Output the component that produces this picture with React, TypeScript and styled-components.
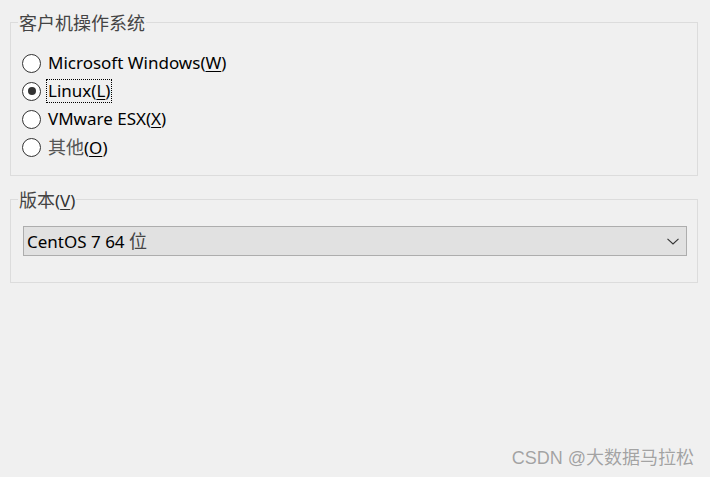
import React from "react";
import styled, { createGlobalStyle } from "styled-components";

const GlobalStyle = createGlobalStyle`
  html, body {
    margin: 0;
    padding: 0;
    background: #f0f0f0;
  }
  body {
    font-family: "Noto Sans", "Noto Sans CJK SC", sans-serif;
    font-size: 17px;
    color: #000;
  }
`;

const Page = styled.div`
  position: relative;
  width: 710px;
  height: 477px;
  box-sizing: border-box;
  padding: 12px 12px 0 10px;
  display: flex;
  flex-direction: column;
  gap: 13px;
  overflow: hidden;
`;

const GroupBox = styled.fieldset<{ $pt: number; $pb: number }>`
  margin: 0;
  min-width: 0;
  border: 1px solid #dcdcdc;
  padding: ${(p) => p.$pt}px 10px ${(p) => p.$pb}px 12px;
`;

const Legend = styled.legend`
  margin-left: -5px;
  padding: 0 1px;
  line-height: 20px;
  height: 20px;
  color: #333;
`;

const Cjk = styled.span<{ $tone?: string }>`
  font-family: "Noto Sans CJK SC", sans-serif;
  font-size: 18px;
  color: ${(p) => p.$tone || "#3a3a3a"};
`;

const Key = styled.span`
  text-decoration: underline;
  text-underline-offset: 2px;
  text-decoration-thickness: 1px;
`;

const RadioList = styled.div`
  display: flex;
  flex-direction: column;
`;

const RadioRow = styled.label`
  display: flex;
  align-items: center;
  height: 28px;
  gap: 5px;
  margin-left: -1px;
`;

const RadioCircle = styled.span<{ $checked?: boolean }>`
  position: relative;
  width: 19px;
  height: 19px;
  box-sizing: border-box;
  border-radius: 50%;
  border: 1.5px solid #333;
  background: #fff;
  flex: none;
  &::after {
    content: "";
    display: ${(p) => (p.$checked ? "block" : "none")};
    position: absolute;
    left: 50%;
    top: 50%;
    width: 8px;
    height: 8px;
    margin: -4px 0 0 -4px;
    border-radius: 50%;
    background: #333;
  }
`;

const RadioText = styled.span<{ $focused?: boolean }>`
  line-height: 22px;
  padding: 0 1px;
  border: 1px dotted ${(p) => (p.$focused ? "#000" : "transparent")};
  white-space: nowrap;
`;

const Combo = styled.div`
  height: 30px;
  box-sizing: border-box;
  border: 1px solid #adadad;
  background: #e1e1e1;
  display: flex;
  align-items: center;
  justify-content: space-between;
  padding: 0 7px 0 3px;
`;

const ComboText = styled.span`
  line-height: 22px;
  white-space: nowrap;
`;

const Watermark = styled.div`
  position: absolute;
  right: 16px;
  bottom: 7px;
  font-family: "Liberation Sans", "Noto Sans CJK SC", sans-serif;
  font-size: 18px;
  line-height: 24px;
  color: #a3a3a3;
  text-shadow: 0 0 1px rgba(255, 255, 255, 0.9);
  white-space: nowrap;
`;

const Chevron = () => (
  <svg width="12" height="7" viewBox="0 0 12 7" aria-hidden>
    <polyline
      points="0.5,0.8 6,6 11.5,0.8"
      fill="none"
      stroke="#333"
      strokeWidth="1.1"
    />
  </svg>
);

type Opt = { text: React.ReactNode; key: string; checked?: boolean };

const options: Opt[] = [
  { text: "Microsoft Windows", key: "W" },
  { text: "Linux", key: "L", checked: true },
  { text: "VMware ESX", key: "X" },
  { text: <Cjk $tone="#555">其他</Cjk>, key: "O" },
];

export default function App() {
  return (
    <>
      <GlobalStyle />
      <Page>
        <GroupBox $pt={17} $pb={14}>
          <Legend>
            <Cjk $tone="#444">客户机操作系统</Cjk>
          </Legend>
          <RadioList>
            {options.map((o) => (
              <RadioRow key={o.key}>
                <RadioCircle $checked={o.checked} />
                <RadioText $focused={o.checked}>
                  {o.text}(<Key>{o.key}</Key>)
                </RadioText>
              </RadioRow>
            ))}
          </RadioList>
        </GroupBox>
        <GroupBox $pt={17} $pb={26}>
          <Legend>
            <Cjk $tone="#444">版本</Cjk>(<Key>V</Key>)
          </Legend>
          <Combo>
            <ComboText>
              CentOS 7 64 <Cjk $tone="#444">位</Cjk>
            </ComboText>
            <Chevron />
          </Combo>
        </GroupBox>
        <Watermark>CSDN @大数据马拉松</Watermark>
      </Page>
    </>
  );
}
